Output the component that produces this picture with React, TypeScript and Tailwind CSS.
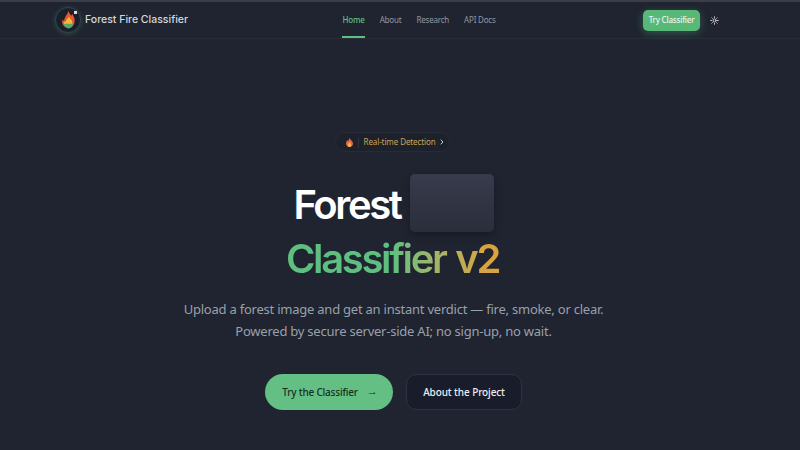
import { ChevronRight, Sun } from "lucide-react";

function FireLogo() {
  return (
    <div className="relative flex h-[26px] w-[26px] items-center justify-center rounded-full border border-[#33454a] bg-[#1a202b] shadow-[0_1px_5px_rgba(95,191,128,0.25)]">
      <svg width="17" height="20" viewBox="0 0 20 22">
        <path d="M10 0c.500 3 2 4 3.500 6 .5-.7.800-1.300 1-2 2 3 3.500 6 2.500 10-.4 2-1.500 3.500-2.500 4.500H5C2.500 16.500 1.800 13 3 10.500c.6 1 1.200 1.600 2 2C4.500 8 8.500 5 10 0z" fill="#e4572e" />
        <path d="M10.500 7c.6 2 3.500 3.500 4 6.500.3 2-.5 3.500-1.500 4.500H6c-1.500-1.200-2-3.500-1.200-5.500.5.500 1 .8 1.500 1C6.800 11 9.500 9.500 10.500 7z" fill="#f6b73c" />
        <path d="M4.500 15.500h11c-.4 3.500-2.800 5.500-5.500 5.500s-5-2-5.500-5.500z" fill="#58a86e" />
      </svg>
      <span className="absolute right-[3px] top-[3px] h-[3px] w-[3px] bg-[#d8d8d8]" />
    </div>
  );
}

export default function App() {
  return (
    <div className="h-[450px] w-[800px] overflow-hidden border-t-2 border-[#3a3e47] bg-[#1f2430] font-['Noto_Sans',sans-serif]">
      <nav className="flex h-[37px] items-center justify-between border-b border-[#282d39] pl-[55px] pr-[81px]">
        <div className="flex items-center gap-[4px]">
          <FireLogo />
          <span className="font-['Inter',sans-serif] text-[10.500px] font-medium text-[#d6d8dc]">
            Forest Fire Classifier
          </span>
        </div>
        <div className="ml-[7px] flex h-full items-center gap-[15px] text-[8px] tracking-[-0.200px] text-[#9298a3]">
          <a className="flex h-full items-center border-b-2 border-[#5fbf80] pt-[2px] font-medium text-[#5fbf80]">Home</a>
          <a>About</a>
          <a>Research</a>
          <a>API Docs</a>
        </div>
        <div className="flex items-center gap-[10px]">
          <button className="h-[21px] w-[57px] rounded-[5px] bg-[#58b878] text-[8px] font-medium tracking-[-0.200px] text-[#eaf5ee] shadow-[0_2px_8px_rgba(95,191,128,0.35)]">
            Try Classifier
          </button>
          <Sun size={9} strokeWidth={2.500} className="text-[#d8dade]" />
        </div>
      </nav>

      <main className="flex flex-col items-center pr-[13px] pt-[93px]">
        <div className="ml-[-3px] flex h-[20px] w-[115px] items-center rounded-full border border-[#262b36] bg-[#1c212c] pl-[10px] text-[8px] tracking-[-0.100px] text-[#c9a557]">
          <svg width="7" height="9" viewBox="0 0 7 9">
            <path d="M3.500 0c.5 1.500 3.500 3 3.500 5.500C7 7.500 5.500 9 3.500 9S0 7.500 0 5.500C0 3.800 1 2.800 1.500 2c.3.600.6 1 1 1.100C2.600 2 3 1 3.500 0z" fill="#e2673a" />
            <path d="M3.500 4c.3.800 1.800 1.500 1.800 3 0 1.100-.8 2-1.800 2s-1.800-.9-1.800-2c0-1.400 1.500-2 1.800-3z" fill="#f3b05a" />
          </svg>
          <span className="ml-[5px] mr-[5px] h-[11px] w-px bg-[#2f3440]" />
          <span>Real-time Detection</span>
          <ChevronRight size={8} strokeWidth={3} className="ml-[2px] text-[#c9ccd2]" />
        </div>

        <h1 className="mt-[21px] flex flex-col items-center font-['Inter',sans-serif] text-[40px] font-semibold leading-[55px] tracking-[-2.350px]">
          <span className="flex h-[60px] items-center gap-[9px] text-white">
            <span className="pt-[2px]">Forest</span>
            <span className="block h-[58px] w-[84px] rounded-[5px] bg-gradient-to-b from-[#383b4c] to-[#2a2d3a] shadow-[0_3px_8px_rgba(0,0,0,0.3)]" />
          </span>
          <span className="mt-[-2px] bg-gradient-to-r from-[#5fbf80] from-50% to-[#dca23c] to-95% bg-clip-text pb-[2px] pr-[2px] text-transparent [word-spacing:2px]">
            Classifier v2
          </span>
        </h1>

        <p className="mt-[10px] text-center text-[13px] leading-[22px] tracking-[-0.230px] text-[#9aa0ab]">
          Upload a forest image and get an instant verdict — fire, smoke, or clear.
          <br />
          Powered by secure server-side AI; no sign-up, no wait.
        </p>

        <div className="mt-[32px] flex items-center gap-[13px]">
          <button className="flex h-[36px] w-[128px] items-center justify-center gap-[9px] rounded-full bg-[#64bf84] pl-[2px] text-[10px] font-medium tracking-[-0.200px] text-[#163022]">
            Try the Classifier <span className="mt-[-2px] text-[11px]">→</span>
          </button>
          <button className="h-[36px] w-[116px] rounded-[10px] border border-[#2f3340] bg-[#191c2a] text-[10px] font-medium tracking-[-0.100px] text-[#eceef2]">
            About the Project
          </button>
        </div>
      </main>
    </div>
  );
}
